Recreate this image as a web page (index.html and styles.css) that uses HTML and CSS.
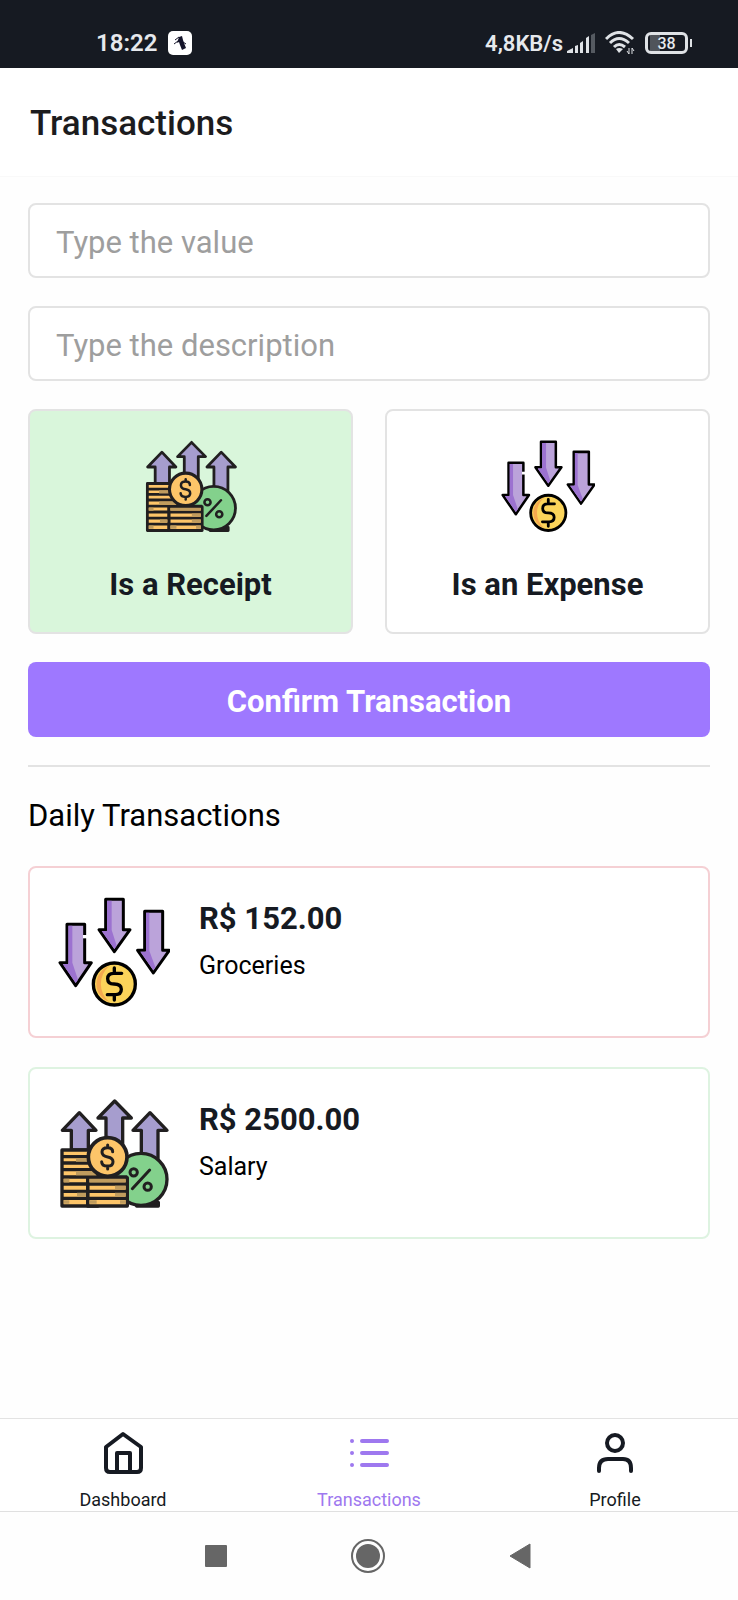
FILE: index.html
```html
<!DOCTYPE html>
<html lang="en">
<head>
<meta charset="utf-8">
<meta name="viewport" content="width=device-width, initial-scale=1">
<title>Transactions</title>
<link rel="stylesheet" href="styles.css">
</head>
<body>
<svg class="sprite" aria-hidden="true">
  <symbol id="expense" viewBox="54 48 336 336">
    <g stroke="#000" stroke-width="9" stroke-linejoin="round">
      <path fill="#bba3da" d="M197 58H250V149H270L223 215L177 149H197Z"/>
      <path fill="#9c72d0" stroke="none" d="M201 62H215V150L230 197L223 207L185 153H201Z"/>
      <path fill="#bba3da" d="M314 94H368V211H388L340 279L293 211H314Z"/>
      <path fill="#9c72d0" stroke="none" d="M318 98H328V212L346 262L340 271L301 215H318Z"/>
      <path fill="#bba3da" d="M81 133H134V248H154L107 317L60 248H81Z"/>
      <path fill="#9c72d0" stroke="none" d="M85 137H97V248L114 299L107 309L68 252H85Z"/>
      <path stroke="#fff" stroke-width="10" d="M129 170H142"/>
    </g>
    <circle cx="223" cy="312" r="63" fill="#fbd45a" stroke="#000" stroke-width="10"/>
    <path fill="#f5a94f" d="M208 258A57 57 0 0 0 208 366A70 70 0 0 1 208 258Z"/>
    <path fill="none" stroke="#000" stroke-width="10" stroke-linecap="round" stroke-linejoin="round" d="M245 280H221Q203 280 203 296Q203 312 222 312Q244 312 244 328Q244 344 226 344H202M223 264V280M223 344V360"/>
  </symbol>
  <symbol id="receipt" viewBox="54 51 336 336">
    <g stroke="#211f20" stroke-width="10" stroke-linejoin="round">
      <path fill="#a69dce" d="M94 210V151H67L118 98L168 151H145V210Z"/>
      <path fill="#a69dce" d="M198 200V114H174L224 63L274 114H248V200Z"/>
      <path fill="#a69dce" d="M304 240V151H279L330 98L381 151H354V240Z"/>
      <path fill="#211f20" d="M290 367H355V378H290Z"/>
      <circle cx="303" cy="298" r="78" fill="#83d18c"/>
      <path fill="#fdc569" d="M66 210H174V378H66Z"/>
      <path fill="#fdc569" d="M143 293H262V378H143Z"/>
      <path fill="none" d="M66 230H150M66 249H150M66 269H160M66 291H262M66 312H262M66 334H262M66 355H262M143 291V378"/>
    </g>
    <path fill="none" stroke="#c09c5e" stroke-width="11" d="M108 240H145M108 280H170M71 302H88M71 366H88M111 344H138M148 302H257"/>
    <path fill="none" stroke="#c09c5e" stroke-width="11" d="M225 323H257M225 344H257M148 366H170M240 366H257"/>
    <circle cx="203" cy="231" r="58" fill="#fdc569" stroke="#211f20" stroke-width="11"/>
    <g fill="none" stroke="#211f20" stroke-width="9" stroke-linecap="round">
      <path d="M218 215Q218 203 203 203Q186 203 186 216Q186 228 203 231Q219 234 219 245Q219 258 203 258Q185 258 185 245M203 195V203M203 258V267"/>
      <path d="M329 270L277 326"/>
      <circle cx="281" cy="277" r="11"/>
      <circle cx="323" cy="320" r="11"/>
    </g>
  </symbol>
</svg>

<div class="status">
  <span class="status-time">18:22</span>
  <svg class="status-app" viewBox="0 0 24 24" aria-hidden="true"><rect width="24" height="24" rx="5" fill="#fff"/><path d="M11 6L14 5L15 9L16 12L18 17L14 19L12 14L11 11L9 12L10 9Z" fill="#14142a"/><path d="M7 9L11 6M6 13L10 10M15 11L18 13" stroke="#14142a" fill="none"/></svg>
  <span class="status-speed">4,8KB/s</span>
  <svg class="status-signal" viewBox="0 0 28 20" aria-hidden="true"><path d="M0 20V18L6 15V20ZM8 13L11 12V20H8ZM13 10L16 8V20H13ZM19 5L22 3V20H19Z" fill="#dfe2e6"/><path d="M24 2L28 0V20H24Z" fill="#555a61"/></svg>
  <svg class="status-wifi" viewBox="0 0 30 24" aria-hidden="true"><g fill="none" stroke="#dfe2e6" stroke-width="3"><path d="M1 8Q14-5 28 8"/><path d="M5 12Q14 3 24 12"/><path d="M9 16Q14 11 20 16"/></g><path d="M11 18Q14 16 18 18L14 22Z" fill="#dfe2e6"/><path d="M24 17V23M22 20L24 23M27 23V17L29 20" stroke="#dfe2e6" stroke-width="1" fill="none"/></svg>
  <span class="battery"><span class="battery-cell">38</span></span>
</div>

<header class="header"><h1>Transactions</h1></header>

<main class="main">
  <form class="form">
    <input class="field" type="text" placeholder="Type the value" aria-label="Value">
    <input class="field" type="text" placeholder="Type the description" aria-label="Description">
    <div class="kinds">
      <label class="kind"><input type="radio" name="kind" checked><svg aria-hidden="true"><use href="#receipt"/></svg><span>Is a Receipt</span></label>
      <label class="kind"><input type="radio" name="kind"><svg aria-hidden="true"><use href="#expense"/></svg><span>Is an Expense</span></label>
    </div>
    <button class="confirm" type="button">Confirm Transaction</button>
  </form>
  <hr class="rule">
  <h2 class="subtitle">Daily Transactions</h2>
  <ul class="list">
    <li class="entry entry-expense"><svg aria-hidden="true"><use href="#expense"/></svg><div><strong>R$ 152.00</strong><p>Groceries</p></div></li>
    <li class="entry entry-receipt"><svg aria-hidden="true"><use href="#receipt"/></svg><div><strong>R$ 2500.00</strong><p>Salary</p></div></li>
  </ul>
</main>

<nav class="tabs">
  <a href="#dashboard"><svg viewBox="0 0 48 48" aria-hidden="true"><path d="M24 5L42 18V39Q42 43 38 43H11Q7 43 7 39V18ZM18 43V24H31V43"/></svg>Dashboard</a>
  <a class="active" href="#transactions" aria-current="page"><svg viewBox="0 0 48 48" aria-hidden="true"><path d="M17 12H42M17 24H42M17 36H42M7 12H7.010M7 24H7.010M7 36H7.010"/></svg>Transactions</a>
  <a href="#profile"><svg viewBox="0 0 48 48" aria-hidden="true"><circle cx="24" cy="14" r="8"/><path d="M8 42V39Q8 30 17 30H32Q40 30 40 39V42"/></svg>Profile</a>
</nav>

<div class="system">
  <button type="button" aria-label="Recent apps"><svg width="22" height="22" viewBox="0 0 22 22"><rect width="22" height="22" rx="1" fill="#666"/></svg></button>
  <button type="button" aria-label="Home"><svg width="34" height="34" viewBox="0 0 34 34"><circle cx="17" cy="17" r="16" fill="none" stroke="#666" stroke-width="2"/><circle cx="17" cy="17" r="12" fill="#666"/></svg></button>
  <button type="button" aria-label="Back"><svg width="22" height="26" viewBox="0 0 22 26"><path d="M21 1V25L1 13Z" fill="#666" stroke="#666" stroke-linejoin="round"/></svg></button>
</div>
</body>
</html>
```

FILE: styles.css
```css
* { box-sizing: border-box; }

body {
  margin: 0;
  min-height: 100vh;
  display: flex;
  flex-direction: column;
  background: #fefefe;
  color: #161a22;
  font-family: Roboto, "Liberation Sans", sans-serif;
}

svg { display: block; flex: none; }
.sprite { width: 0; height: 0; position: absolute; }
h1, h2, p, ul { margin: 0; padding: 0; }
button, input { font: inherit; }

.status {
  display: flex;
  align-items: center;
  height: 68px;
  padding: 18px 46px 0 96px;
  background: #161a22;
  color: #e6e9ed;
  font-size: 22px;
  font-weight: 600;
}
.status-time { font-size: 24px; }
.status-app { width: 24px; height: 24px; margin-left: 11px; }
.status-speed { margin-left: auto; }
.status-signal { width: 28px; height: 20px; margin-left: 4px; }
.status-wifi { width: 30px; height: 24px; margin: 0 10px; }
.battery { display: flex; align-items: center; }
.battery::after {
  content: "";
  width: 2px;
  height: 8px;
  margin-left: 2px;
  background: #dfe2e6;
}
.battery-cell {
  width: 43px;
  height: 22px;
  border: 3px solid #dfe2e6;
  border-radius: 6px;
  background: linear-gradient(90deg, #50545b 10px, transparent 10px) no-repeat 2px 0;
  font-size: 16px;
  font-weight: 500;
  line-height: 17px;
  text-align: center;
}

.header {
  padding: 36px 30px 32px;
  background: #fff;
  border-bottom: 1px solid #f9f9f9;
}
.header h1 {
  color: #1c1c1e;
  font-size: 35px;
  font-weight: 500;
  line-height: 40px;
}

.main { flex: 1; padding: 26px 28px 28px; }
.form { display: flex; flex-direction: column; gap: 28px; }

.field {
  width: 100%;
  height: 75px;
  padding: 4px 26px 0;
  border: 2px solid #e3e3e3;
  border-radius: 8px;
  background: #fff;
  color: #161a22;
  font-size: 31px;
}
.field::placeholder { color: #9e9e9e; opacity: 1; }

.kinds { display: grid; grid-template-columns: 1fr 1fr; gap: 32px; }
.kind {
  display: flex;
  flex-direction: column;
  align-items: center;
  gap: 34px;
  padding: 28px 0 29px;
  border: 2px solid #e3e3e3;
  border-radius: 8px;
  background: #fff;
  font-size: 31px;
  font-weight: 700;
  line-height: 36px;
}
.kind:has(:checked) { background: #d9f6db; }
.kind input { position: absolute; opacity: 0; }
.kind svg { width: 94px; height: 94px; }

.confirm {
  height: 75px;
  padding: 4px 0 0;
  border: 0;
  border-radius: 8px;
  background: #9e78ff;
  color: #fff;
  font-size: 31px;
  font-weight: 700;
}

.rule {
  height: 2px;
  margin: 28px 0;
  border: 0;
  background: #e3e3e3;
}
.subtitle {
  color: #000;
  font-size: 31px;
  font-weight: 400;
  line-height: 42px;
}

.list {
  display: flex;
  flex-direction: column;
  gap: 29px;
  margin-top: 29px;
  list-style: none;
}
.entry {
  display: flex;
  gap: 29px;
  padding: 28px;
  border: 2px solid;
  border-radius: 8px;
  background: #fff;
}
.entry-expense { border-color: #f5d0d4; }
.entry-receipt { border-color: #def3e1; }
.entry svg { width: 112px; height: 112px; }
.entry strong { display: block; font-size: 31px; line-height: 46px; }
.entry p { margin-top: 8px; color: #000; font-size: 25px; line-height: 32px; }

.tabs {
  display: grid;
  grid-template-columns: repeat(3, 1fr);
  padding: 10px 0 1px;
  border-top: 1px solid #e3e3e3;
  border-bottom: 1px solid #e0e0e0;
  background: #fff;
}
.tabs a {
  display: flex;
  flex-direction: column;
  align-items: center;
  gap: 13px;
  color: #161a22;
  font-size: 18px;
  line-height: 20px;
  text-decoration: none;
}
.tabs svg {
  width: 48px;
  height: 48px;
  fill: none;
  stroke: currentColor;
  stroke-width: 4px;
  stroke-linecap: round;
  stroke-linejoin: round;
}
.tabs .active { color: #9e78ef; }

.system {
  display: flex;
  align-items: center;
  justify-content: center;
  gap: 124px;
  height: 88px;
  padding-right: 2px;
  background: #fefefe;
}
.system button { padding: 0; border: 0; background: none; }
```
